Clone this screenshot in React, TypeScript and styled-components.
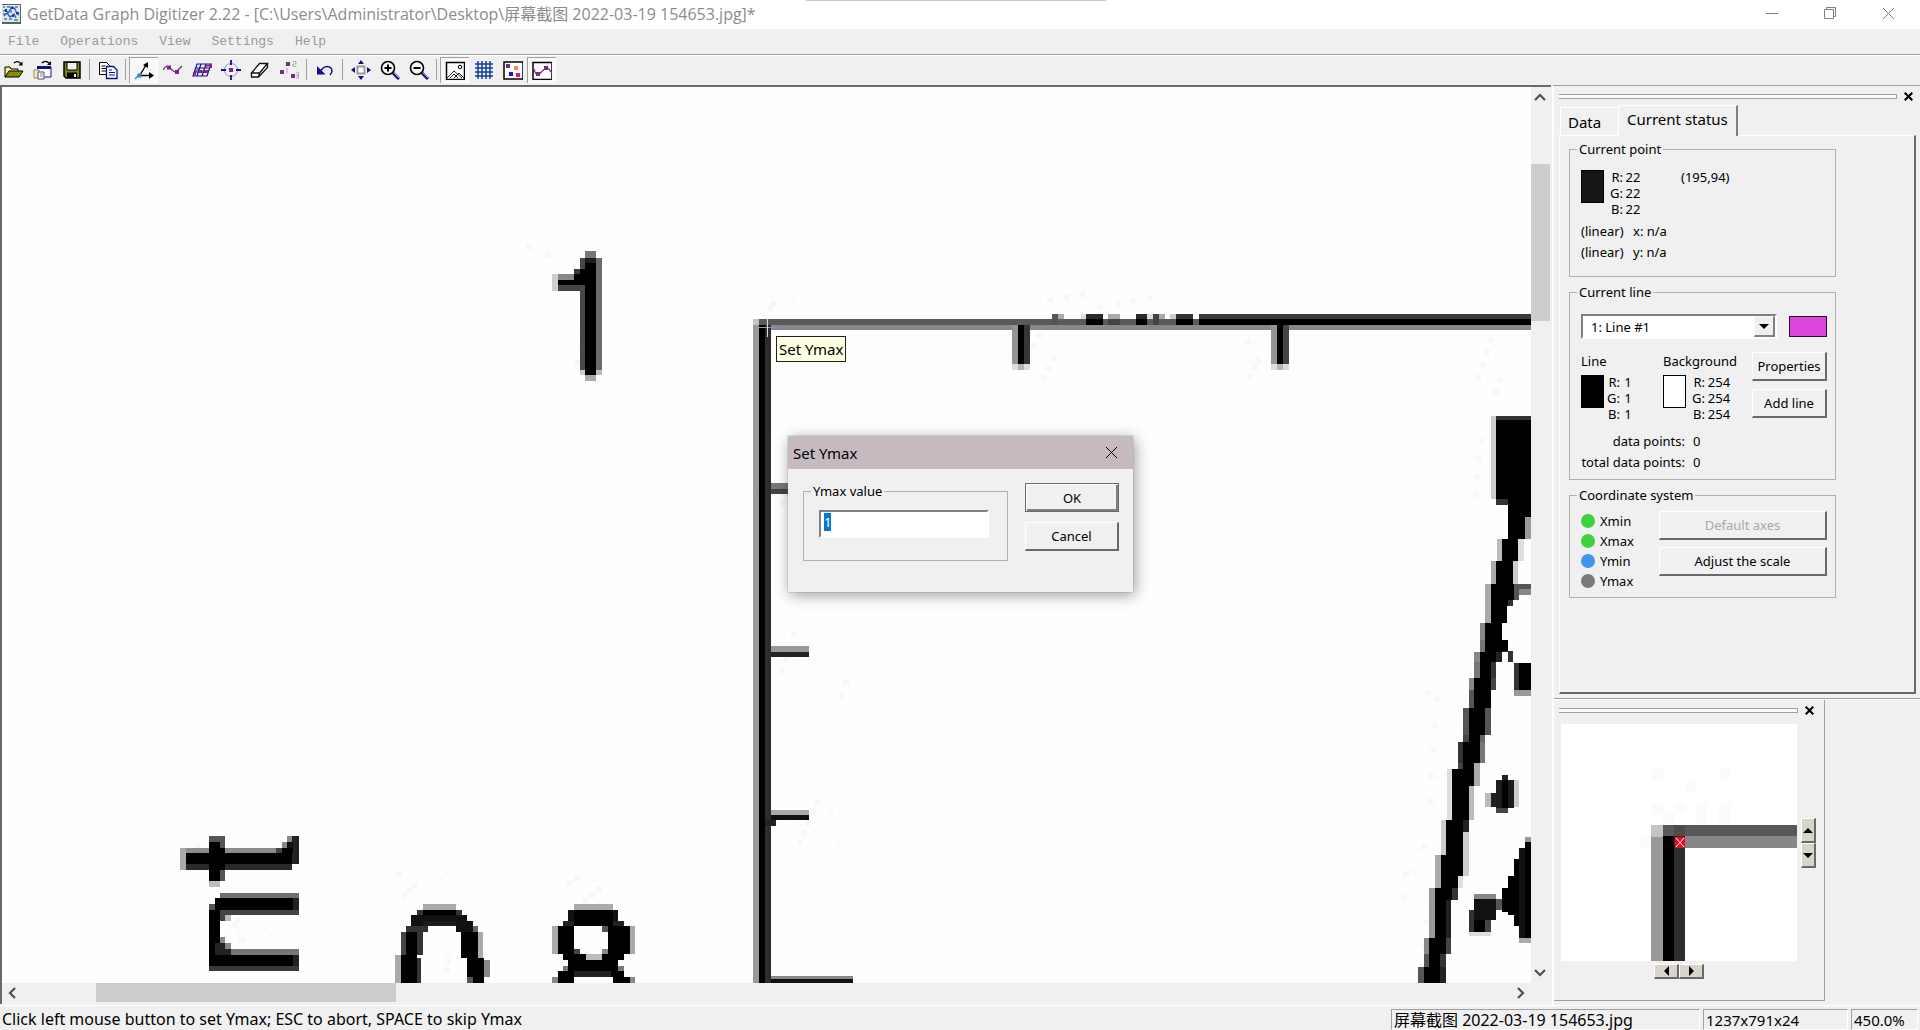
import React, { useEffect, useRef } from "react";
import styled, { createGlobalStyle, css } from "styled-components";

const face = "#f0f0f0";
const shade = "#a0a0a0";
const dark = "#696969";
const ui = `"Noto Sans", "Noto Sans CJK SC", sans-serif`;

const GlobalStyle = createGlobalStyle`
  * { box-sizing: border-box; }
  html, body, #root { height: 100%; }
  body { margin: 0; background: ${face}; color: #000; font-family: ${ui}; font-size: 13px; overflow: hidden; }
  button, input, select { font: inherit; color: inherit; margin: 0; padding: 0; border-radius: 0; }
`;

const Window = styled.div`
  display: flex;
  flex-direction: column;
  height: 100vh;
  min-height: 600px;
`;

const TitleBar = styled.header`
  position: relative;
  display: flex;
  align-items: center;
  flex: none;
  height: 29px;
  padding: 0 3px 2px 2px;
  background: #fff;
  color: #8c8c8c;
  &::after {
    content: "";
    position: absolute;
    top: 0;
    left: 42%;
    width: 300px;
    height: 1px;
    background: #c8c8c8;
  }
`;

const AppTitle = styled.h1`
  flex: 1;
  margin: 0 0 0 6px;
  font-family: "Open Sans", "Noto Sans CJK SC", sans-serif;
  font-size: 16px;
  line-height: 20px;
  font-weight: 400;
  white-space: nowrap;
`;

const CaptionButton = styled.button`
  display: grid;
  place-items: center;
  width: 58px;
  height: 27px;
  border: 0;
  background: transparent;
  color: #808080;
`;

const MenuBar = styled.nav`
  display: flex;
  align-items: center;
  gap: 21px;
  flex: none;
  height: 26px;
  padding: 0 8px;
  border-bottom: 1px solid ${shade};
`;

const MenuItem = styled.button`
  border: 0;
  background: transparent;
  color: #9a9a9a;
  font-family: "Liberation Mono", monospace;
  font-size: 13px;
  line-height: 20px;
`;

const ToolBar = styled.div`
  display: flex;
  align-items: center;
  flex: none;
  height: 30px;
  margin-left: -1px;
  padding-bottom: 2px;
  border-top: 1px solid #fff;
`;

const ToolButton = styled.button<{ $on?: boolean }>`
  display: grid;
  place-items: center;
  width: 29px;
  height: 26px;
  border: 0;
  background: transparent;
  ${(p) =>
    p.$on &&
    css`
      background: #f8f8f8;
      box-shadow: inset 1px 1px ${shade}, inset -1px -1px #fff;
    `}
`;

const Separator = styled.span`
  width: 1px;
  height: 21px;
  margin: 0 3px;
  background: ${shade};
`;

const Workspace = styled.main`
  display: flex;
  flex: 1;
  min-height: 0;
`;

const Viewer = styled.section`
  display: grid;
  grid-template-columns: minmax(0, 1fr) 20px;
  grid-template-rows: minmax(0, 1fr) 21px;
  flex: 1;
  min-width: 0;
  border: solid ${dark};
  border-width: 2px 0 0 2px;
  margin-bottom: 1px;
`;

const Canvas = styled.div`
  position: relative;
  overflow: hidden;
  background: #fefefe;
`;

const Plot = styled.svg`
  display: block;
  width: 1529px;
  height: 896px;
`;

const ScrollBar = styled.div<{ $vertical?: boolean }>`
  display: flex;
  flex-direction: ${(p) => (p.$vertical ? "column" : "row")};
  background: ${face};
  button {
    width: ${(p) => (p.$vertical ? 18 : 22)}px;
    height: ${(p) => (p.$vertical ? 22 : 20)}px;
  }
`;

const ScrollArrow = styled.button`
  display: grid;
  place-items: center;
  flex: none;
  border: 0;
  background: transparent;
  color: #505050;
`;

const Track = styled.div<{ $vertical?: boolean }>`
  display: flex;
  flex-direction: ${(p) => (p.$vertical ? "column" : "row")};
  flex: 1;
  padding: ${(p) => (p.$vertical ? "0 1px 0 0" : "0 0 2px")};
`;

const Spacer = styled.span<{ $grow: number }>`
  flex: ${(p) => p.$grow} 1 0;
`;

const Thumb = styled.span<{ $grow: number }>`
  flex: ${(p) => p.$grow} 1 0;
  background: #cdcdcd;
`;

const Dock = styled.aside`
  display: flex;
  flex-direction: column;
  flex: none;
  width: 368px;
  margin-left: 1px;
  border-top: 1px solid ${shade};
  border-left: 2px solid #fff;
`;

const DockPanel = styled.section`
  padding: 6px 4px 4px 5px;
`;

const DockHandle = styled.div`
  display: flex;
  align-items: center;
  gap: 3px;
  height: 9px;
`;

const Grip = styled.span`
  flex: 1;
  height: 5px;
  border: solid ${shade};
  border-width: 1px 1px 1px 0;
  background: #fafafa;
`;

const DockClose = styled.button`
  display: grid;
  place-items: center;
  width: 16px;
  height: 9px;
  border: 0;
  background: transparent;
`;

const Tabs = styled.div`
  display: flex;
  align-items: flex-end;
  height: 34px;
  padding: 3px 0 0 1px;
`;

const Tab = styled.button<{ $active?: boolean }>`
  height: ${(p) => (p.$active ? 31 : 28)}px;
  width: ${(p) => (p.$active ? 120 : 58)}px;
  padding: ${(p) => (p.$active ? "0 8px 4px" : "0 7px")};
  margin-bottom: ${(p) => (p.$active ? -1 : 0)}px;
  border: solid #fff;
  border-width: 1px 0 0 1px;
  border-right: ${(p) => (p.$active ? `2px solid #808080` : "0")};
  background: ${face};
  font-size: 15px;
  line-height: 20px;
  text-align: left;
  white-space: nowrap;
`;

const TabPage = styled.div`
  display: flex;
  flex-direction: column;
  gap: 7px;
  height: 559px;
  padding: 5px 78px 0 9px;
  border: solid;
  border-width: 1px 2px 2px 1px;
  border-color: #fff #696969 #696969 #fff;
`;

const Group = styled.fieldset`
  min-width: 0;
  margin: 0;
  padding: 12px 8px 13px 11px;
  border: 1px solid #b0b0b0;
`;

const LineGroup = styled(Group)`
  padding: 12px 8px 6px 11px;
`;

const AxisGroup = styled(Group)`
  padding: 8px 8px 6px 11px;
`;

const Legend = styled.legend`
  margin-left: -4px;
  padding: 0 2px;
  line-height: 16px;
`;

const Row = styled.div<{ $gap?: number }>`
  display: flex;
  align-items: flex-start;
  gap: ${(p) => p.$gap ?? 6}px;
`;

const Swatch = styled.span<{ $color: string }>`
  flex: none;
  width: 23px;
  height: 33px;
  margin-top: 1px;
  border: 1px solid #000;
  background: ${(p) => p.$color};
`;

const Channels = styled.dl<{ $value: number }>`
  display: grid;
  grid-template-columns: 13px ${(p) => p.$value}px;
  column-gap: 2px;
  margin: 0;
  line-height: 16px;
  dt { text-align: right; }
  dd { margin: 0; text-align: center; }
`;

const Coordinates = styled.span`
  margin-left: 34px;
  line-height: 16px;
`;

const AxisReadout = styled.div`
  display: grid;
  grid-template-columns: 46px auto;
  column-gap: 6px;
  padding-top: 4px;
  line-height: 21px;
`;

const ComboBox = styled.div`
  position: relative;
  flex: 1;
  height: 25px;
  border: 2px solid;
  border-color: #808080 #fff #fff #808080;
  background: #fff;
`;

const ComboSelect = styled.select`
  display: block;
  width: 100%;
  height: 21px;
  padding: 0 24px 0 8px;
  border: 0;
  outline: 0;
  appearance: none;
  background: transparent;
`;

const ComboArrow = styled.span`
  position: absolute;
  inset: 0 0 0 auto;
  display: grid;
  place-items: center;
  width: 21px;
  border: solid;
  border-width: 1px 2px 2px 1px;
  border-color: #f8f8f8 #808080 #808080 #f8f8f8;
  background: ${face};
  pointer-events: none;
`;

const ColorButton = styled.button`
  width: 38px;
  height: 21px;
  margin-top: 2px;
  border: 1px solid #201020;
  background: #dd46dd;
`;

const raised = css`
  border: solid;
  border-width: 1px 2px 2px 1px;
  border-color: #fff ${dark} ${dark} #fff;
  background: ${face};
`;

const PushButton = styled.button<{ $default?: boolean }>`
  ${raised}
  height: 29px;
  width: 100%;
  line-height: 18px;
  white-space: nowrap;
  ${(p) =>
    p.$default &&
    css`
      border: 1px solid ${dark};
      box-shadow: inset 1px 1px #fff, inset -2px -2px #808080;
    `}
  &:disabled { color: #a8a8a8; }
`;

const ButtonStack = styled.div<{ $width: number; $gap: number }>`
  display: flex;
  flex-direction: column;
  gap: ${(p) => p.$gap}px;
  flex: none;
  width: ${(p) => p.$width}px;
  margin-left: auto;
`;

const LineButtons = styled(ButtonStack)`
  padding-top: 13px;
`;

const LineBody = styled.div`
  display: flex;
  flex-direction: column;
  padding-top: 2px;
`;

const LineDetails = styled.div`
  padding-top: 14px;
`;

const LineColors = styled.div`
  display: grid;
  grid-template-columns: 82px auto;
  row-gap: 5px;
  line-height: 16px;
`;

const Totals = styled.dl`
  display: grid;
  grid-template-columns: 104px auto;
  column-gap: 8px;
  margin: 9px 0 0;
  line-height: 21px;
  dt { text-align: right; white-space: nowrap; }
  dd { margin: 0; }
`;

const AxisList = styled.ul`
  margin: 0;
  padding: 0;
  list-style: none;
`;

const AxisItem = styled.li<{ $color: string }>`
  display: flex;
  align-items: center;
  gap: 5px;
  line-height: 20px;
  &::before {
    content: "";
    width: 14px;
    height: 14px;
    border-radius: 50%;
    background: ${(p) => p.$color};
  }
`;

const ZoomDock = styled.section`
  flex: 1;
  width: 271px;
  margin-bottom: 4px;
  padding: 6px 7px 0 5px;
  border: solid ${shade};
  border-width: 0 1px 1px 0;
`;

const DockRule = styled.hr`
  width: 100%;
  margin: 0;
  border: 0;
  border-top: 1px solid ${shade};
  border-bottom: 1px solid #fff;
`;

const ZoomGrid = styled.div`
  display: grid;
  grid-template-columns: 236px 15px;
  gap: 3px 4px;
  justify-items: center;
  align-items: center;
  padding: 9px 0 0 2px;
`;

const Magnifier = styled.svg`
  display: block;
  width: 236px;
  height: 237px;
`;

const Spin = styled.div<{ $vertical?: boolean }>`
  display: flex;
  flex-direction: ${(p) => (p.$vertical ? "column" : "row")};
  button {
    ${raised}
    display: grid;
    place-items: center;
    width: ${(p) => (p.$vertical ? 15 : 25)}px;
    height: ${(p) => (p.$vertical ? 25 : 15)}px;
    background: #d8d4cc;
  }
`;

const StatusBar = styled.footer`
  display: flex;
  gap: 3px;
  flex: none;
  height: 25px;
  padding: 3px 2px 0;
  border-top: 1px solid #fff;
  font-size: 16px;
  line-height: 20px;
  white-space: nowrap;
`;

const StatusText = styled.span`
  flex: 1;
`;

const StatusPane = styled.span<{ $width: number; $size: number }>`
  width: ${(p) => p.$width}px;
  padding-left: 2px;
  border: solid;
  border-width: 1px;
  border-color: ${shade} #fff #fff ${shade};
  font-size: ${(p) => p.$size}px;
`;

const ToolTip = styled.div`
  position: absolute;
  left: 774px;
  top: 249px;
  padding: 0 2px;
  border: 1px solid #202020;
  background: #ffffe1;
  font-size: 15px;
  line-height: 24px;
`;

const Dialog = styled.section`
  position: absolute;
  left: 786px;
  top: 349px;
  width: 345px;
  height: 156px;
  background: ${face};
  box-shadow: 0 0 1px #777, 2px 3px 14px rgba(0, 0, 0, 0.4);
`;

const DialogTitle = styled.header`
  display: flex;
  align-items: center;
  justify-content: space-between;
  height: 33px;
  padding-left: 5px;
  background: #c4bac0;
  font-size: 15px;
`;

const DialogClose = styled(CaptionButton)`
  width: 44px;
  color: #000;
`;

const DialogBody = styled.form`
  display: flex;
  gap: 17px;
  padding: 14px 14px 0 15px;
`;

const ValueGroup = styled(Group)`
  flex: 1;
  height: 78px;
  padding: 11px 18px 0 15px;
  ${Legend} { margin-left: -8px; }
`;

const ValueInput = styled.input`
  display: block;
  width: 100%;
  height: 28px;
  padding: 0 3px 5px;
  border: 2px solid;
  border-color: #808080 #fff #fff #808080;
  outline: 0;
  background: #fff;
  &::selection { background: #0078d7; color: #fff; }
`;

/* ---------- toolbar icons, 20 x 20 ---------- */

const Icon = ({ children }: { children: React.ReactNode }) => (
  <svg width="20" height="20" viewBox="0 0 20 20" fill="none" aria-hidden="true">
    {children}
  </svg>
);

const purple = "#7a2a86";
const navy = "#10108a";

const icons: Record<string, React.ReactNode> = {
  open: (
    <>
      <path d="M1 17V7h5l1 2h7v3" stroke="#000" fill="#f4f08a" />
      <path d="M1 17l4-6h14l-4 6z" fill="#8a8a10" stroke="#000" />
      <path d="M10 3c2-2 5-2 7 1" stroke="#000" strokeWidth="1.4" />
      <path d="M18.500 1.500v4h-4z" fill="#000" />
    </>
  ),
  reopen: (
    <>
      <path d="M5 7h13v10H9" stroke={navy} fill="#fff" />
      <path d="M4 6h14v3H4z" fill={navy} />
      <path d="M1 10h5v8H1z" fill="#f4f0a0" stroke="#888" />
      <path d="M5 12h6v7H5z" fill="#fff" stroke="#556" />
      <path d="M7 14h3M7 16h3" stroke="#88a" />
      <path d="M9 3c2-2 5-2 7 0" stroke="#000" strokeWidth="1.4" />
      <path d="M18 1v4h-4z" fill="#000" />
    </>
  ),
  save: (
    <>
      <path d="M2 2h16v16H4l-2-2z" fill="#808010" stroke="#000" strokeWidth="1.500" />
      <path d="M5 2.500h10V10H5z" fill="#f2f2f2" stroke="#000" />
      <path d="M5 12.500h10V18H5z" fill="#000" />
      <path d="M12 14h2v3h-2z" fill="#fff" />
    </>
  ),
  copy: (
    <>
      <path d="M1.500 2.500h7l3 3v9h-10z" fill="#fff" stroke="#000" />
      <path d="M3.500 6h4M3.500 8.500h5M3.500 11h5" stroke="#000" />
      <path d="M8.500 6.500h7l3.500 3.500v8.500H8.500z" fill="#fff" stroke={navy} strokeWidth="1.300" />
      <path d="M11 10h3M11 12.500h6M11 15h6" stroke={navy} />
    </>
  ),
  axes: (
    <>
      <path d="M6 15l6-10M5 15.500h12" stroke="#000" strokeWidth="1.400" />
      <path d="M14 2v6l-5-3zM15 12l5 3.500-5 3.500z" fill="#000" />
      <path d="M1 19l4-4" stroke="#2a8ae0" strokeWidth="1.500" />
      <path d="M3.500 13.500h4v4h-4z" fill="#2a8ae0" />
    </>
  ),
  curve: (
    <>
      <path d="M0 10c2-4 4-4 6-3s5 7 8 4l5-5" stroke={purple} strokeWidth="1.300" />
      <path d="M4 5.500h4v4H4zM12 10h4v4h-4z" fill={purple} />
    </>
  ),
  area: (
    <>
      <path d="M5 4h14l-4 12H1zM9 4L5 16M14 4l-4 12M4 8h14M2 12h14" stroke={navy} strokeWidth="1.200" />
      <path d="M2 14c3-5 4-5 6-3s4 0 5-3 3-3 6-2" stroke={purple} strokeWidth="1.300" />
      <path d="M1 12h3v3H1zM7 10h3v3H7zM12 10h4v3h-4zM17 4h3v4h-3z" fill={purple} />
    </>
  ),
  point: (
    <>
      <circle cx="10" cy="10" r="6.500" stroke="#8a8ac8" />
      <path d="M10 0v5M10 15v5M0 10h5M15 10h5" stroke={navy} strokeWidth="1.800" />
      <path d="M8 8h4v4H8z" fill={purple} />
    </>
  ),
  eraser: (
    <path d="M1.500 13l8-9.500h8l-8 9.500zM1.500 13v4h7l1-4M8.500 17l9-9.500v-4" fill="#fff" stroke="#111" strokeWidth="1.300" />
  ),
  reorder: (
    <>
      <path d="M7 2h4v4H7zM1 10h4v4H1zM12 14h4v4h-4z" fill={purple} />
      <path d="M14 1.500h3v2.500h-3v2.500h3.500M8 8v5M17 13h2.500v5H17M17 15.500h2M7 9l1-1" stroke="#aaa" />
    </>
  ),
  undo: (
    <>
      <path d="M5 12l3-4c4-3 9-1 9 3 0 2-1 3-2 4" stroke={navy} strokeWidth="1.400" />
      <path d="M2 6v8.500h8.500z" fill={navy} />
    </>
  ),
  fit: (
    <>
      <path d="M6.500 6.500h7v7h-7z" stroke="#999" strokeWidth="2" fill="#fff" />
      <path d="M10 0l3 4H7zM10 20l3-4H7zM0 10l4-3v6zM20 10l-4-3v6z" fill={navy} />
    </>
  ),
  zoomIn: (
    <>
      <path d="M13 13l6 6" stroke={navy} strokeWidth="3" />
      <path d="M14 13l5 5" stroke="#a0a0c0" />
      <circle cx="8" cy="8" r="6.500" fill="#f4f4f4" stroke="#000" strokeWidth="1.600" />
      <path d="M8 4.500v7M4.500 8h7" stroke="#000" strokeWidth="2" />
    </>
  ),
  zoomOut: (
    <>
      <path d="M13 13l6 6" stroke={navy} strokeWidth="3" />
      <path d="M14 13l5 5" stroke="#a0a0c0" />
      <circle cx="8" cy="8" r="6.500" fill="#f4f4f4" stroke="#000" strokeWidth="1.600" />
      <path d="M4.500 8h7" stroke="#000" strokeWidth="2" />
    </>
  ),
  image: (
    <>
      <path d="M1.500 2.500h18v17h-18z" fill="#fff" stroke="#000" strokeWidth="1.500" />
      <circle cx="15" cy="7" r="1.800" stroke="#000" />
      <path d="M2 18l7-7 8 7M5 18l4-4 4 4M9 18l5-5 5 5" stroke="#222" />
    </>
  ),
  grid: (
    <path d="M4 1v18M8 1v18M12 1v18M16 1v18M1 4h18M1 8h18M1 12h18M1 16h18" stroke="#123f9c" strokeWidth="1.500" />
  ),
  points: (
    <>
      <path d="M1 2h19v17H1z" fill="#fff" stroke="#000" strokeWidth="1.500" />
      <path d="M3 4h4v4H3z" fill={purple} />
      <path d="M11 6h4v4h-4z" fill="#f08a50" />
      <path d="M6 12h4v4H6z" fill="#1010ff" />
      <path d="M13 13h4v4h-4z" fill="#e81080" />
    </>
  ),
  lines: (
    <>
      <path d="M1 2.500h19v17H1z" fill="#fff" stroke="#000" strokeWidth="1.500" />
      <path d="M2 9c1 5 3 6 5 5s5-5 7-6 3 1 5 4" stroke={purple} strokeWidth="1.300" />
      <path d="M4 12h4v4H4zM12 6h4v4h-4z" fill={purple} />
    </>
  ),
};

const tools: Array<[string, string, boolean?] | null> = [
  ["open", "Open image"],
  ["reopen", "Open workspace"],
  ["save", "Save"],
  null,
  ["copy", "Copy data"],
  null,
  ["axes", "Set the scale", true],
  ["curve", "Auto trace lines"],
  ["area", "Digitize area"],
  ["point", "Point capture mode"],
  ["eraser", "Data point eraser"],
  ["reorder", "Reorder points"],
  null,
  ["undo", "Undo"],
  null,
  ["fit", "Fit to window"],
  ["zoomIn", "Zoom in"],
  ["zoomOut", "Zoom out"],
  null,
  ["image", "Show image", true],
  ["grid", "Show grid"],
  ["points", "Show points"],
  ["lines", "Show lines", true],
];

const AppIcon = () => (
  <svg width="19" height="20" viewBox="0 0 19 20" aria-hidden="true">
    <path d="M0 0h19v20H0z" fill="#dce6ec" />
    <path d="M0 0h18v1H0zM18 0h1v20h-1zM0 18h19v2H0z" fill="#566" />
    <path d="M1 2h2v2H1zM5 2h4v2H5zM13 2h3v2h-3zM1 9h3v2H1zM8 6h2v3H8zM2 14h3v2H2zM7 14h3v2H7zM12 15h4v2h-4z" fill="#7d92a2" />
    <path d="M1 7l3-1 2 3 4-6 3 2 2 5 2 1M2 12l3-3 3 4 4-3 2 4" stroke="#2c5cc4" strokeWidth="1.300" fill="none" />
    <path d="M9 3h3v2H9zM3 5h2v3H3zM14 8h3v2h-3zM10 11h2v2h-2z" fill="#123a9c" />
  </svg>
);

const Cross = ({ size = 13, weight = 1 }: { size?: number; weight?: number }) => (
  <svg width={size} height={size} viewBox="0 0 13 13" aria-hidden="true">
    <path d="M1 1l11 11M12 1L1 12" stroke="currentColor" strokeWidth={weight} />
  </svg>
);

const chevrons = { up: "M2 9l5-5 5 5", down: "M2 5l5 5 5-5", left: "M9 2L4 7l5 5", right: "M5 2l5 5-5 5" };
const triangles = { up: "M0 8h10L5 3z", down: "M0 3h10L5 8z", left: "M8 0v10L3 5z", right: "M3 0v10l5-5z" };
type Direction = keyof typeof chevrons;

const Chevron = ({ to }: { to: Direction }) => (
  <svg width="14" height="14" viewBox="0 0 14 14" aria-hidden="true">
    <path d={chevrons[to]} stroke="currentColor" strokeWidth="2.200" fill="none" />
  </svg>
);

const Triangle = ({ to }: { to: Direction }) => (
  <svg width="10" height="10" viewBox="0 0 10 10" aria-hidden="true">
    <path d={triangles[to]} fill="#000" />
  </svg>
);

/* ---------- digitized image ---------- */

/* Each block is left, top, right, bottom, grey level. */
type Block = [number, number, number, number, string];
const K = "#000";

const plot: Block[] = [
  // top label
  [585, 251, 596, 258, "#777"], [580, 258, 585, 370, "#484848"], [585, 258, 596, 375, K], [585, 258, 596, 263, "#1c1c1c"],
  [596, 258, 602, 370, "#6c6c6c"], [574, 269, 580, 274, "#3a3a3a"], [574, 274, 580, 285, K], [552, 274, 558, 291, "#cfcfcf"],
  [558, 274, 574, 280, "#888"], [558, 280, 580, 285, K], [558, 285, 580, 291, "#444"], [580, 269, 585, 285, K],
  [580, 370, 585, 375, "#ccc"], [596, 370, 602, 375, "#bbb"], [585, 375, 596, 381, "#aaa"],
  // frame
  [753, 319, 759, 325, "#c4c4c4"], [753, 325, 759, 983, "#999"], [765, 325, 771, 983, "#2d2d2d"], [759, 325, 765, 983, K],
  [759, 319, 1199, 325, "#5a5a5a"], [771, 325, 1531, 330, "#888"], [1199, 314, 1531, 319, "#3b3b3b"], [1199, 319, 1531, 325, K],
  [1052, 314, 1058, 325, "#555"], [1058, 314, 1064, 319, "#aaa"], [1081, 314, 1086, 319, "#ddd"], [1086, 314, 1103, 319, "#2a2a2a"],
  [1086, 319, 1103, 325, K], [1108, 314, 1120, 319, "#aaa"], [1108, 319, 1120, 325, "#444"], [1136, 314, 1147, 319, "#2a2a2a"],
  [1136, 319, 1147, 325, K], [1147, 314, 1153, 319, "#ddd"], [1153, 314, 1159, 325, "#444"], [1159, 314, 1165, 319, "#aaa"],
  [1170, 314, 1176, 319, "#ccc"], [1176, 314, 1193, 319, "#333"], [1176, 319, 1193, 325, K],
  [1012, 325, 1018, 364, "#949494"], [1018, 325, 1024, 364, K], [1024, 325, 1030, 364, "#363636"], [1012, 364, 1030, 370, "#dcdcdc"], [1018, 364, 1024, 370, "#b4b4b4"],
  [1271, 325, 1277, 364, "#949494"], [1277, 319, 1283, 364, K], [1283, 325, 1289, 364, "#444"], [1271, 364, 1289, 370, "#dcdcdc"], [1277, 364, 1283, 370, "#b4b4b4"],
  [771, 483, 809, 489, "#777"], [771, 489, 809, 494, "#444"],
  [771, 646, 809, 652, "#999"], [771, 652, 809, 657, "#222"], [771, 810, 809, 815, "#aaa"], [771, 815, 809, 820, "#111"], [765, 820, 776, 826, "#222"],
  [771, 976, 853, 979, "#888"], [771, 979, 853, 983, "#111"],
  // rotated t
  [180, 848, 186, 870, "#aaa"], [186, 848, 299, 853, "#8c8c8c"], [186, 853, 299, 864, K], [186, 864, 292, 870, "#2a2a2a"],
  [209, 836, 220, 881, K], [220, 836, 225, 881, "#555"], [220, 848, 225, 870, K], [209, 836, 220, 842, "#555"], [209, 881, 220, 887, "#bbb"],
  [287, 836, 292, 842, "#888"], [292, 836, 299, 864, "#222"], [282, 842, 287, 848, "#888"], [287, 842, 293, 848, "#111"], [276, 848, 282, 853, "#444"], [282, 848, 293, 853, K],
  // rotated n
  [220, 893, 299, 898, "#707070"], [215, 898, 293, 910, K], [293, 898, 299, 910, "#222"], [220, 910, 299, 915, "#444"], [209, 904, 215, 910, "#555"],
  [209, 910, 220, 966, K], [220, 910, 225, 921, "#444"], [225, 915, 231, 921, "#bbb"], [220, 937, 225, 943, "#888"], [215, 943, 231, 955, "#222"],
  [225, 943, 231, 949, "#888"], [231, 949, 299, 955, "#777"], [209, 955, 293, 966, K], [293, 955, 299, 966, "#222"], [209, 966, 299, 971, "#3a3a3a"],
  // zero
  [423, 904, 456, 910, "#aaa"], [417, 910, 462, 915, "#333"], [423, 910, 456, 921, K], [411, 915, 467, 926, "#111"], [406, 926, 428, 932, "#333"],
  [423, 921, 456, 926, "#1c1c1c"], [456, 921, 473, 932, "#111"], [406, 932, 422, 943, K], [401, 932, 406, 955, "#444"], [406, 932, 417, 955, K],
  [417, 932, 423, 955, "#333"], [395, 955, 401, 983, "#aaa"], [401, 955, 417, 983, K], [417, 958, 421, 983, "#333"],
  [461, 932, 478, 958, K], [473, 926, 478, 932, "#666"], [478, 932, 483, 958, "#aaa"], [467, 958, 484, 983, K], [484, 960, 490, 977, "#888"], [467, 977, 473, 983, "#555"],
  // eight
  [574, 904, 613, 910, "#aaa"], [568, 910, 618, 921, "#111"], [563, 921, 624, 926, "#222"], [574, 910, 613, 926, K], [552, 926, 558, 954, "#aaa"],
  [558, 926, 574, 954, K], [608, 926, 630, 954, K], [630, 926, 635, 954, "#aaa"], [574, 949, 580, 954, "#444"], [602, 926, 608, 932, "#555"],
  [602, 949, 608, 954, "#888"], [563, 954, 624, 960, K], [586, 954, 602, 960, "#bbb"], [568, 960, 618, 971, K], [563, 966, 568, 977, "#777"],
  [618, 966, 624, 977, "#777"], [568, 971, 618, 977, "#222"], [558, 971, 574, 977, K], [611, 971, 624, 977, K], [552, 977, 558, 983, "#888"],
  [558, 977, 574, 983, K], [613, 977, 630, 983, K], [630, 977, 635, 983, "#888"],
  // marker on the right edge
  [1491, 416, 1496, 499, "#ccc"], [1496, 416, 1531, 420, "#333"], [1496, 420, 1531, 499, K], [1496, 499, 1508, 505, "#333"], [1508, 499, 1531, 517, K],
  [1525, 517, 1531, 539, "#999"], [1519, 584, 1531, 589, "#555"], [1519, 589, 1531, 595, "#888"], [1508, 600, 1513, 606, "#333"],
  [1503, 640, 1508, 651, K], [1508, 651, 1513, 662, "#333"], [1514, 663, 1519, 690, "#333"], [1519, 663, 1531, 690, K], [1514, 690, 1531, 696, "#999"],
  // dot
  [1502, 775, 1508, 780, "#222"], [1496, 780, 1514, 808, "#1c1c1c"], [1502, 780, 1508, 808, K], [1491, 793, 1496, 807, "#222"], [1485, 793, 1491, 807, "#bbb"],
  [1496, 808, 1508, 813, "#444"], [1514, 780, 1519, 807, "#ccc"],
  // lower marker
  [1525, 837, 1531, 842, "#999"], [1525, 842, 1531, 938, K], [1519, 848, 1525, 938, "#111"], [1514, 859, 1519, 926, K], [1508, 876, 1514, 915, K],
  [1502, 888, 1508, 912, K], [1496, 899, 1502, 910, "#555"], [1519, 938, 1531, 943, "#aaa"],
  [1474, 894, 1496, 899, "#888"], [1474, 899, 1496, 920, "#111"], [1469, 910, 1474, 932, "#333"], [1474, 920, 1485, 932, K], [1485, 920, 1491, 932, "#444"], [1469, 932, 1491, 936, "#ddd"],
];

/* The slanted curve, one band per step: top, bottom, then the edges from left to right, then both fringe tones. */
const curve: [number, number, number, number, number, number, string, string][] = [
  [517, 539, 1508, 1508, 1525, 1525, K, K],
  [539, 561, 1497, 1502, 1518, 1524, "#bbb", "#ddd"],
  [561, 584, 1491, 1496, 1513, 1518, "#aaa", "#ccc"],
  [584, 600, 1485, 1491, 1514, 1519, "#aaa", "#555"],
  [600, 606, 1485, 1491, 1508, 1513, "#aaa", "#aaa"],
  [606, 623, 1485, 1491, 1507, 1507, "#aaa", K],
  [623, 640, 1480, 1485, 1502, 1502, "#888", K],
  [640, 652, 1480, 1485, 1503, 1508, "#777", "#333"],
  [652, 662, 1474, 1480, 1496, 1502, "#888", "#222"],
  [662, 678, 1474, 1480, 1491, 1496, "#777", "#333"],
  [678, 690, 1469, 1474, 1491, 1496, "#888", "#444"],
  [690, 708, 1469, 1474, 1491, 1491, "#555", K],
  [708, 735, 1463, 1469, 1485, 1491, "#555", "#555"],
  [735, 742, 1463, 1469, 1480, 1485, "#444", "#666"],
  [742, 763, 1458, 1463, 1480, 1485, "#333", "#777"],
  [763, 769, 1458, 1463, 1474, 1480, "#444", "#aaa"],
  [769, 786, 1447, 1452, 1474, 1480, "#ddd", "#aaa"],
  [786, 820, 1447, 1452, 1469, 1474, "#ddd", "#bbb"],
  [820, 832, 1441, 1446, 1463, 1469, "#ccc", "#222"],
  [832, 855, 1441, 1446, 1463, 1469, "#ccc", "#ccc"],
  [855, 876, 1435, 1441, 1463, 1469, "#aaa", "#ccc"],
  [876, 888, 1435, 1441, 1458, 1463, "#aaa", "#ddd"],
  [888, 900, 1429, 1435, 1452, 1458, "#999", "#333"],
  [900, 938, 1429, 1435, 1446, 1451, "#999", "#222"],
  [938, 954, 1424, 1429, 1446, 1451, "#888", "#444"],
  [954, 967, 1424, 1429, 1440, 1446, "#555", "#333"],
  [967, 983, 1418, 1424, 1440, 1446, "#555", "#222"],
];

/* Areas with faint compression noise around the strokes. */
const noisy: [number, number, number, number][] = [
  [526, 244, 552, 290], [570, 300, 610, 390], [975, 290, 1250, 312], [975, 332, 1060, 390], [1240, 332, 1300, 380], [1455, 330, 1531, 400],
  [740, 480, 800, 530], [775, 630, 850, 700], [776, 790, 850, 850], [165, 830, 205, 880], [395, 870, 485, 903], [535, 870, 660, 903],
  [425, 925, 455, 975], [230, 915, 295, 945], [1420, 690, 1455, 830], [1455, 420, 1490, 520], [1400, 830, 1430, 960], [752, 290, 800, 318],
];

const specks: Block[] = noisy.flatMap(([l, t, r, b], n) => {
  const count = Math.round(((r - l) * (b - t)) / 220);
  return Array.from({ length: count }, (_, i): Block => {
    const x = l + (((i * 47 + n * 31) % 97) / 97) * (r - l - 6);
    const y = t + (((i * 71 + n * 13) % 89) / 89) * (b - t - 6);
    return [Math.round(x), Math.round(y), Math.round(x) + 6, Math.round(y) + 6, i % 4 ? "#fcfcfc" : "#f8f8f8"];
  });
});

const Blocks = ({ items }: { items: Block[] }) => (
  <>
    {items.map(([l, t, r, b, fill], i) => (
      <rect key={i} x={l} y={t} width={r - l} height={b - t} fill={fill} />
    ))}
  </>
);

const Graph = () => (
  <Plot viewBox="2 87 1529 896" shapeRendering="crispEdges" role="img" aria-label="Scanned graph">
    <Blocks items={specks} />
    {curve.map(([t, b, a, l, r, z, first, last], i) => (
      <g key={i}>
        <rect x={a} y={t} width={l - a} height={b - t} fill={first} />
        <rect x={l} y={t} width={r - l} height={b - t} fill={K} />
        <rect x={r} y={t} width={z - r} height={b - t} fill={last} />
      </g>
    ))}
    <Blocks items={plot} />
    <path d="M759 327h18" stroke="#8c8cd8" />
    <path d="M767 318v19" stroke="#deded0" />
  </Plot>
);

const ZoomedPixels = () => (
  <Magnifier viewBox="0 0 236 237" shapeRendering="crispEdges" role="img" aria-label="Magnified cursor area">
    <path fill="#fff" d="M0 0h236v237H0z" />
    <path fill="#fbfbfb" d="M91 45h11v11H91zM158 45h11v11h-11zM124 57h11v11h-11zM91 79h11v11H91zM113 79h11v11h-11zM135 79h11v22h-11zM102 90h11v11h-11zM158 79h11v22h-11zM79 113h11v11H79z" />
    <path fill="#c4c4c4" d="M90 101h12v12H90z" />
    <path fill="#595959" d="M102 101h134v11H102z" />
    <path fill="#4c4c4c" d="M113 101h11v11h-11z" />
    <path fill="#868686" d="M124 112h112v12H124z" />
    <path fill="#999" d="M90 113h12v124H90z" />
    <path fill="#000" d="M102 112h11v125h-11z" />
    <path fill="#2d2d2d" d="M113 112h11v125h-11z" />
    <path fill="#e8101c" d="M114 113h10v11h-10z" />
    <path stroke="#fff" d="M115 114l8 9M123 114l-8 9" shapeRendering="auto" />
  </Magnifier>
);

const Rgb = ({ values, width }: { values: [number, number, number]; width: number }) => (
  <Channels $value={width}>
    {["R:", "G:", "B:"].map((name, i) => (
      <React.Fragment key={name}>
        <dt>{name}</dt>
        <dd>{values[i]}</dd>
      </React.Fragment>
    ))}
  </Channels>
);

const SetYmaxDialog = () => {
  const input = useRef<HTMLInputElement>(null);
  useEffect(() => {
    input.current?.focus();
    input.current?.select();
  }, []);
  return (
    <Dialog role="dialog" aria-labelledby="dialog-title">
      <DialogTitle>
        <span id="dialog-title">Set Ymax</span>
        <DialogClose type="button" aria-label="Close dialog">
          <Cross />
        </DialogClose>
      </DialogTitle>
      <DialogBody onSubmit={(e) => e.preventDefault()}>
        <ValueGroup>
          <Legend id="ymax-label">Ymax value</Legend>
          <ValueInput ref={input} aria-labelledby="ymax-label" defaultValue="1" />
        </ValueGroup>
        <ButtonStack $width={94} $gap={10}>
          <PushButton $default>OK</PushButton>
          <PushButton type="button">Cancel</PushButton>
        </ButtonStack>
      </DialogBody>
    </Dialog>
  );
};

export default function App() {
  return (
    <Window>
      <GlobalStyle />
      <TitleBar>
        <AppIcon />
        <AppTitle>GetData Graph Digitizer 2.22 - [C:\Users\Administrator\Desktop\屏幕截图 2022-03-19 154653.jpg]*</AppTitle>
        <CaptionButton aria-label="Minimize">
          <svg width="13" height="13" viewBox="0 0 13 13"><path d="M0 6.500h12" stroke="currentColor" /></svg>
        </CaptionButton>
        <CaptionButton aria-label="Restore">
          <svg width="13" height="13" viewBox="0 0 13 13"><path d="M.5 2.500h9v9h-9zM2.500 2.500v-2h9v9h-2" stroke="currentColor" fill="none" /></svg>
        </CaptionButton>
        <CaptionButton aria-label="Close">
          <Cross />
        </CaptionButton>
      </TitleBar>
      <MenuBar>
        {["File", "Operations", "View", "Settings", "Help"].map((name) => (
          <MenuItem key={name}>{name}</MenuItem>
        ))}
      </MenuBar>
      <ToolBar role="toolbar">
        {tools.map((tool, i) =>
          tool ? (
            <ToolButton key={i} aria-label={tool[1]} $on={tool[2]}>
              <Icon>{icons[tool[0]]}</Icon>
            </ToolButton>
          ) : (
            <Separator key={i} />
          )
        )}
      </ToolBar>
      <Workspace>
        <Viewer>
          <Canvas>
            <Graph />
            <ToolTip role="tooltip">Set Ymax</ToolTip>
            <SetYmaxDialog />
          </Canvas>
          <ScrollBar $vertical>
            <ScrollArrow aria-label="Scroll up"><Chevron to="up" /></ScrollArrow>
            <Track $vertical>
              <Spacer $grow={55} />
              <Thumb $grow={157} />
              <Spacer $grow={639} />
            </Track>
            <ScrollArrow aria-label="Scroll down"><Chevron to="down" /></ScrollArrow>
          </ScrollBar>
          <ScrollBar>
            <ScrollArrow aria-label="Scroll left"><Chevron to="left" /></ScrollArrow>
            <Track>
              <Spacer $grow={72} />
              <Thumb $grow={300} />
              <Spacer $grow={1112} />
            </Track>
            <ScrollArrow aria-label="Scroll right"><Chevron to="right" /></ScrollArrow>
          </ScrollBar>
        </Viewer>
        <Dock>
          <DockPanel>
            <DockHandle>
              <Grip />
              <DockClose aria-label="Close status panel"><Cross size={9} weight={3} /></DockClose>
            </DockHandle>
            <Tabs role="tablist">
              <Tab role="tab">Data</Tab>
              <Tab role="tab" aria-selected $active>Current status</Tab>
            </Tabs>
            <TabPage role="tabpanel">
              <Group>
                <Legend>Current point</Legend>
                <Row>
                  <Swatch $color="#161616" />
                  <Rgb values={[22, 22, 22]} width={16} />
                  <Coordinates>(195,94)</Coordinates>
                </Row>
                <AxisReadout>
                  <span>(linear)</span>
                  <span>x: n/a</span>
                  <span>(linear)</span>
                  <span>y: n/a</span>
                </AxisReadout>
              </Group>
              <LineGroup>
                <Legend>Current line</Legend>
                <LineBody>
                  <Row $gap={12}>
                    <ComboBox>
                      <ComboSelect aria-label="Line">
                        <option>1: Line #1</option>
                      </ComboSelect>
                      <ComboArrow><Triangle to="down" /></ComboArrow>
                    </ComboBox>
                    <ColorButton aria-label="Line color" />
                  </Row>
                  <Row>
                    <LineDetails>
                      <LineColors>
                        <span>Line</span>
                        <span>Background</span>
                        <Row $gap={3}>
                          <Swatch $color="#000" />
                          <Rgb values={[1, 1, 1]} width={12} />
                        </Row>
                        <Row $gap={6}>
                          <Swatch $color="#fff" />
                          <Rgb values={[254, 254, 254]} width={24} />
                        </Row>
                      </LineColors>
                      <Totals>
                        <dt>data points:</dt>
                        <dd>0</dd>
                        <dt>total data points:</dt>
                        <dd>0</dd>
                      </Totals>
                    </LineDetails>
                    <LineButtons $width={75} $gap={8}>
                      <PushButton>Properties</PushButton>
                      <PushButton>Add line</PushButton>
                    </LineButtons>
                  </Row>
                </LineBody>
              </LineGroup>
              <AxisGroup>
                <Legend>Coordinate system</Legend>
                <Row>
                  <AxisList>
                    <AxisItem $color="#3fd13f">Xmin</AxisItem>
                    <AxisItem $color="#3fd13f">Xmax</AxisItem>
                    <AxisItem $color="#3f95ee">Ymin</AxisItem>
                    <AxisItem $color="#7a7a7a">Ymax</AxisItem>
                  </AxisList>
                  <ButtonStack $width={168} $gap={7}>
                    <PushButton disabled>Default axes</PushButton>
                    <PushButton>Adjust the scale</PushButton>
                  </ButtonStack>
                </Row>
              </AxisGroup>
            </TabPage>
          </DockPanel>
          <DockRule />
          <ZoomDock>
            <DockHandle>
              <Grip />
              <DockClose aria-label="Close magnifier"><Cross size={9} weight={3} /></DockClose>
            </DockHandle>
            <ZoomGrid>
              <ZoomedPixels />
              <Spin $vertical>
                <button aria-label="Move up"><Triangle to="up" /></button>
                <button aria-label="Move down"><Triangle to="down" /></button>
              </Spin>
              <Spin>
                <button aria-label="Move left"><Triangle to="left" /></button>
                <button aria-label="Move right"><Triangle to="right" /></button>
              </Spin>
            </ZoomGrid>
          </ZoomDock>
        </Dock>
      </Workspace>
      <StatusBar>
        <StatusText>Click left mouse button to set Ymax; ESC to abort, SPACE to skip Ymax</StatusText>
        <StatusPane $width={309} $size={16}>屏幕截图 2022-03-19 154653.jpg</StatusPane>
        <StatusPane $width={145} $size={15}>1237x791x24</StatusPane>
        <StatusPane $width={67} $size={15}>450.0%</StatusPane>
      </StatusBar>
    </Window>
  );
}
